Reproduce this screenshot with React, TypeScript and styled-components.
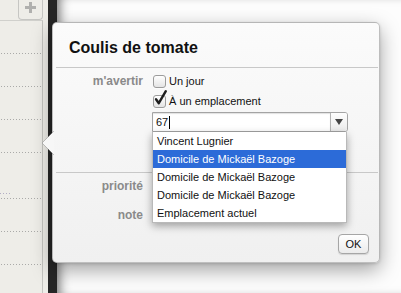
import React from "react";
import styled, { createGlobalStyle } from "styled-components";

const GlobalStyle = createGlobalStyle`
  html, body { margin: 0; padding: 0; background: #fcfcfc; }
  body { font-family: "Liberation Sans", Arial, Helvetica, sans-serif; }
  * { box-sizing: border-box; }
`;

const Screen = styled.div`
  position: relative;
  width: 401px;
  height: 293px;
  overflow: hidden;
  display: flex;
`;

const Sidebar = styled.div`
  width: 48px;
  flex: none;
  background: #eeede8;
  display: flex;
  flex-direction: column;
`;

const SidebarTop = styled.div`
  height: 28px;
  display: flex;
  justify-content: flex-end;
  align-items: flex-start;
  padding-right: 5px;
`;

const AddButton = styled.div`
  width: 25px;
  height: 20px;
  border: 1px solid #c6c6c3;
  border-top: none;
  border-radius: 0 0 4px 4px;
  display: flex;
  align-items: center;
  justify-content: center;
  padding-bottom: 4px;
`;

const ListBox = styled.div`
  width: 43px;
  flex: 1;
  border-top: 1px solid #d0d0cc;
  border-right: 1px solid #c4c4c0;
  display: flex;
  flex-direction: column;
`;

const ListRow = styled.div<{ $h: number }>`
  height: ${(p) => p.$h}px;
  flex: none;
  margin-right: 1px;
  background-image: linear-gradient(to right, #aaaaa8 1px, transparent 1px);
  background-size: 3px 1px;
  background-repeat: repeat-x;
  background-position: 1px bottom;
`;

const Ellipsis = styled.div`
  margin-top: 40px;
  width: 10px;
  height: 1px;
  background-image: linear-gradient(to right, #b3aec4 1px, transparent 1px);
  background-size: 3px 1px;
`;

const DarkStrip = styled.div`
  width: 9px;
  flex: none;
  background: #262626;
`;

const Content = styled.div`
  flex: 1;
  background: #fdfdfd;
  box-shadow: inset 9px 0 12px -7px rgba(0, 0, 0, 0.6);
`;

const Popover = styled.div`
  position: absolute;
  left: 52px;
  top: 22px;
  width: 328px;
  height: 241px;
  border: 1px solid rgba(0, 0, 0, 0.24);
  border-radius: 5px;
  background: linear-gradient(#fbfbfb, #f0f0f0);
  box-shadow: 0 7px 20px rgba(0, 0, 0, 0.36), 0 1px 3px rgba(0, 0, 0, 0.15);
  display: flex;
  flex-direction: column;
  z-index: 2;
`;

const Arrow = styled.svg`
  position: absolute;
  left: -12px;
  top: 108px;
  overflow: visible;
`;

const Header = styled.div`
  padding: 15px 16px 10px;
`;

const Title = styled.h1`
  margin: 0;
  font-size: 16px;
  line-height: 19px;
  font-weight: bold;
  color: #111;
`;

const Divider = styled.div`
  height: 1px;
  margin: 0 1px 0 3px;
  background: #c8c8c8;
  flex: none;
`;

const Section = styled.div<{ $pb: number }>`
  display: grid;
  grid-template-columns: 90px 1fr;
  column-gap: 9px;
  align-items: center;
  padding: 3px 10px ${(p) => p.$pb}px 0;
`;

const Label = styled.div`
  text-align: right;
  font-size: 12px;
  font-weight: bold;
  color: #8a8a8a;
  line-height: 20px;
  height: 20px;
`;

const CheckRow = styled.label`
  display: flex;
  align-items: center;
  gap: 3px;
  height: 20px;
  margin-left: 1px;
  font-size: 11px;
  color: #111;
`;

const Box = styled.span`
  position: relative;
  width: 13px;
  height: 13px;
  border: 1px solid #9c9c9c;
  border-radius: 3px;
  background: linear-gradient(#ffffff, #e4e4e4);
  box-shadow: 0 1px 0 rgba(255, 255, 255, 0.6);
`;

const Check = styled.svg`
  position: absolute;
  left: 0;
  top: -5px;
  overflow: visible;
`;

const Combo = styled.div`
  position: relative;
  grid-column: 2;
  margin-top: 1px;
  width: 196px;
  height: 20px;
  display: flex;
  border: 1px solid #a4a4a4;
  border-radius: 0 3px 3px 0;
  background: #fff;
`;

const ComboInput = styled.div`
  flex: 1;
  display: flex;
  align-items: center;
  padding-left: 3px;
  font-size: 11px;
  color: #111;
  box-shadow: inset 0 1px 1px rgba(0, 0, 0, 0.12);
`;

const Caret = styled.span`
  display: inline-block;
  width: 1px;
  height: 13px;
  margin-left: 1px;
  background: #000;
`;

const ComboButton = styled.div`
  width: 17px;
  border-left: 1px solid #b4b4b4;
  border-radius: 0 2px 2px 0;
  background: linear-gradient(#fdfdfd, #ececec);
  display: flex;
  align-items: center;
  justify-content: center;
`;

const Menu = styled.ul`
  position: absolute;
  left: -1px;
  top: 19px;
  width: 195px;
  margin: 0;
  padding: 0;
  list-style: none;
  background: #fff;
  border: 1px solid #b9b9b9;
  border-top: none;
  box-shadow: 0 3px 8px rgba(0, 0, 0, 0.35);
  z-index: 5;
`;

const MenuItem = styled.li<{ $selected?: boolean }>`
  height: 18px;
  line-height: 18px;
  padding-left: 4px;
  font-size: 11px;
  white-space: nowrap;
  color: ${(p) => (p.$selected ? "#fff" : "#111")};
  background: ${(p) => (p.$selected ? "#2c6bd8" : "transparent")};
`;

const Rows = styled.div`
  display: grid;
  grid-template-columns: 90px 1fr;
  column-gap: 9px;
  row-gap: 9px;
  padding-top: 3px;
`;

const Footer = styled.div`
  display: flex;
  justify-content: flex-end;
  padding: 9px 10px 0 0;
`;

const OkButton = styled.button`
  width: 31px;
  height: 20px;
  padding: 0;
  border: 1px solid #a6a6a6;
  border-radius: 4px;
  background: linear-gradient(#ffffff, #ebebeb);
  box-shadow: 0 1px 1px rgba(0, 0, 0, 0.12);
  font-family: inherit;
  font-size: 11px;
  color: #111;
`;

const sidebarRows = [33, 33, 33, 33, 46, 33, 33, 40];

export default function App() {
  return (
    <>
      <GlobalStyle />
      <Screen>
        <Sidebar>
          <SidebarTop>
            <AddButton>
              <svg width="11" height="11" viewBox="0 0 11 11">
                <rect x="4" y="0" width="3" height="11" fill="#b0b0ae" />
                <rect x="0" y="4" width="11" height="3" fill="#b0b0ae" />
              </svg>
            </AddButton>
          </SidebarTop>
          <ListBox>
            {sidebarRows.map((h, i) => (
              <ListRow key={i} $h={h}>
                {i === 4 && <Ellipsis />}
              </ListRow>
            ))}
          </ListBox>
        </Sidebar>
        <DarkStrip />
        <Content />

        <Popover>
          <Arrow width="13" height="24" viewBox="0 0 13 24">
            <polygon points="13,0 1,12 13,24" fill="#f7f7f7" />
            <polyline points="13,0 1,12 13,24" fill="none" stroke="rgba(0,0,0,0.22)" strokeWidth="1" />
          </Arrow>
          <Header>
            <Title>Coulis de tomate</Title>
          </Header>
          <Divider />
          <Section $pb={40}>
            <Label>m'avertir</Label>
            <CheckRow>
              <Box />
              Un jour
            </CheckRow>
            <Label />
            <CheckRow>
              <Box>
                <Check width="13" height="13" viewBox="0 0 13 13">
                  <path d="M2 8.3 L4.8 12.2 L11.8 0.2" fill="none" stroke="#1e1e1e" strokeWidth="2.4" strokeLinejoin="round" strokeLinecap="round" />
                </Check>
              </Box>
              À un emplacement
            </CheckRow>
            <Combo>
              <ComboInput>
                67
                <Caret />
              </ComboInput>
              <ComboButton>
                <svg width="8" height="6" viewBox="0 0 8 6">
                  <polygon points="0,0 8,0 4,6" fill="#444" />
                </svg>
              </ComboButton>
              <Menu>
                <MenuItem>Vincent Lugnier</MenuItem>
                <MenuItem $selected>Domicile de Mickaël Bazoge</MenuItem>
                <MenuItem>Domicile de Mickaël Bazoge</MenuItem>
                <MenuItem>Domicile de Mickaël Bazoge</MenuItem>
                <MenuItem>Emplacement actuel</MenuItem>
              </Menu>
            </Combo>
          </Section>
          <Divider />
          <Rows>
            <Label>priorité</Label>
            <div />
            <Label>note</Label>
            <div />
          </Rows>
          <Footer>
            <OkButton>OK</OkButton>
          </Footer>
        </Popover>
      </Screen>
    </>
  );
}
